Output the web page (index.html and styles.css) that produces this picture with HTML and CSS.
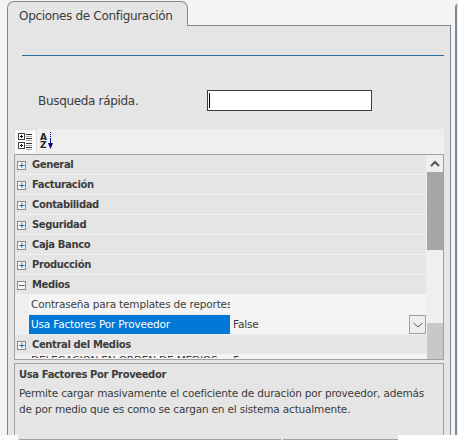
FILE: index.html
```html
<!DOCTYPE html>
<html lang="es">
<head>
<meta charset="utf-8">
<title>Opciones de Configuración</title>
<link rel="stylesheet" href="styles.css">
</head>
<body>
<div class="window">
  <div class="main">
    <div class="tabs"><div class="tab">Opciones de Configuración</div></div>
    <div class="panel">
      <hr class="rule">
      <div class="search">
        <label class="search-label">Busqueda rápida.</label>
        <div class="search-input"><span class="caret"></span></div>
      </div>
      <div class="toolbar">
        <div class="tool active">
          <svg width="15" height="17" viewBox="0 0 15 17" shape-rendering="crispEdges"><rect x="0.500" y="0.500" width="6" height="6" fill="#fff" stroke="#444"/><path d="M2 3.500h3M3.500 2v3" stroke="#111"/><rect x="0.500" y="9.500" width="6" height="6" fill="#fff" stroke="#444"/><path d="M2 12.500h3M3.500 11v3" stroke="#111"/><path d="M8 1.500h6M8 5.500h6M8 10.500h6M8 14.500h6" stroke="#333"/><path d="M8 3.500h6M8 7.500h6M8 12.500h6M8 16.500h6" stroke="#aaa"/></svg>
        </div>
        <div class="tool">
          <svg width="16" height="18" viewBox="0 0 16 18"><text x="0" y="8" class="az">A</text><text x="0" y="16" class="az">Z</text><path d="M10.500 0v1M10.500 2v1M10.500 4v1M10.500 6v6" stroke="#000080" fill="none"/><path d="M8 11h5l-2.500 6z" fill="#000080"/></svg>
        </div>
      </div>
      <div class="grid">
        <div class="grid-rows">
          <div class="cat"><span class="exp">+</span><span>General</span></div>
          <div class="cat"><span class="exp">+</span><span>Facturación</span></div>
          <div class="cat"><span class="exp">+</span><span>Contabilidad</span></div>
          <div class="cat"><span class="exp">+</span><span>Seguridad</span></div>
          <div class="cat"><span class="exp">+</span><span>Caja Banco</span></div>
          <div class="cat"><span class="exp">+</span><span>Producción</span></div>
          <div class="cat"><span class="exp minus">−</span><span>Medios</span></div>
          <div class="prop first"><div class="prop-name">Contraseña para templates de reportes</div><div class="prop-value"></div></div>
          <div class="prop selected"><div class="prop-name">Usa Factores Por Proveedor</div><div class="prop-value"><span>False</span><span class="drop"><svg width="12" height="12" viewBox="0 0 12 12"><path d="M1.500 4l4.500 4 4.500-4" fill="none" stroke="#555"/></svg></span></div></div>
          <div class="cat"><span class="exp">+</span><span>Central del Medios</span></div>
          <div class="prop cut"><div class="prop-name">DELEGACION EN ORDEN DE MEDIOS</div><div class="prop-value">F</div></div>
        </div>
        <div class="scrollbar">
          <div class="arrow"><svg width="10" height="8" viewBox="0 0 10 8"><path d="M1 6l4-4 4 4" fill="none" stroke="#555" stroke-width="2"/></svg></div>
          <div class="thumb"></div>
          <div class="track"></div>
          <div class="thumb low"></div>
        </div>
      </div>
      <div class="help">
        <div class="help-title">Usa Factores Por Proveedor</div>
        <p class="help-text">Permite cargar masivamente el coeficiente de duración por proveedor, además de por medio que es como se cargan en el sistema actualmente.</p>
      </div>
      <div class="footer"><div class="foot-a"></div><div class="foot-b"></div></div>
    </div>
  </div>
  <div class="edge"></div>
</div>
<div class="patch-left"></div>
<div class="patch-right"></div>
</body>
</html>
```
FILE: styles.css
```css
html, body { margin: 0; padding: 0; }
body {
  width: 458px; height: 440px; overflow: hidden; position: relative;
  background: #f4f4f4; color: #3c3c3c;
  font: 10.5px "DejaVu Sans", sans-serif;
}
.window { display: flex; height: 440px; padding-left: 7px; box-sizing: border-box; }
.main { width: 444px; flex: none; display: flex; flex-direction: column; }
.edge { width: 3px; flex: none; margin: 4px 0 0 4px; border-left: 2px solid #7d8a90; border-top-left-radius: 3px; background: #eee; box-sizing: border-box; }
.tabs { height: 25px; flex: none; padding-top: 1px; box-sizing: border-box; position: relative; z-index: 1; }
.tab {
  width: 181px; height: 25px; box-sizing: border-box;
  border: 1px solid #7d8a90; border-bottom: 0; border-radius: 7px 7px 0 0;
  background: #e5e5e5; padding: 7px 0 0 11px; font-size: 12px; line-height: 14px; letter-spacing: -.32px;
}
.panel {
  flex: 1; border: 1px solid #7d8a90; border-bottom: 0; background: #e5e5e5;
  padding: 29px 6px 0 6px; display: flex; flex-direction: column; min-height: 0;
}
.rule { margin: 0 0 0 8px; height: 1px; border: 0; background: #2a6d9b; flex: none; }
.search { display: flex; align-items: center; height: 21px; margin-top: 34px; padding-left: 24px; flex: none; }
.search-label { width: 169px; font-size: 12px; letter-spacing: -.32px; }
.search-input { width: 165px; height: 21px; box-sizing: border-box; border: 1px solid #3c3c3c; background: #fff; padding: 2px 1px; }
.caret { display: block; width: 1px; height: 15px; background: #000; }
.toolbar { display: flex; height: 25px; margin-top: 18px; background: #efefef; flex: none; }
.tool { width: 22px; height: 24px; display: flex; align-items: center; justify-content: center; }
.tool.active { background: #fafafa; border: 1px solid #ddd; border-bottom: 0; box-sizing: border-box; width: 23px; }
.az { font: bold 9px "DejaVu Sans", sans-serif; fill: #222; }
.grid { display: flex; height: 204px; border: 1px solid #a0a0a0; background: #efefef; flex: none; overflow: hidden; }
.grid-rows { flex: 1; min-width: 0; overflow: hidden; }
.cat {
  height: 19px; margin-bottom: 1px; display: flex; align-items: center; background: #e5e5e5;
  font-weight: bold; font-size: 10px; letter-spacing: -.38px; box-shadow: 0 1px 0 #f2f2f2;
}
.exp {
  width: 9px; height: 9px; box-sizing: border-box; margin: 2px 6px 0 2px; border: 1px solid #8a8a8a; background: #f6f6f6;
  color: #2a3f8f; font: 9px/7px "DejaVu Sans", sans-serif; letter-spacing: 0; text-align: center; flex: none;
}
.exp.minus { color: #333; }
.prop { height: 19px; margin-bottom: 1px; display: flex; letter-spacing: -.17px; line-height: 19px; background: #f4f4f4; margin-left: 14px; }
.prop.first { margin-top: 1px; }
.prop-name { width: 201px; flex: none; padding-left: 2px; box-sizing: border-box; white-space: nowrap; overflow: hidden; margin-right: 1px; }
.prop-value { flex: 1; display: flex; justify-content: space-between; padding-left: 2px; }
.selected .prop-name { background: #0078d7; color: #fff; }
.drop { width: 17px; height: 19px; border: 1px solid #a0a0a0; background: #eee; box-sizing: border-box; display: flex; align-items: center; justify-content: center; }
.cut { height: 3px; line-height: 11px; overflow: hidden; margin: 1px 0 0 14px; }
.cut .prop-name, .cut .prop-value { line-height: 11px; }
.scrollbar { width: 16px; flex: none; display: flex; flex-direction: column; margin-left: 1px; }
.arrow { height: 17px; display: flex; align-items: center; justify-content: center; }
.thumb { height: 78px; background: #a6a6a6; }
.track { height: 73px; }
.thumb.low { height: 36px; background: #c8c8c8; }
.help { height: 76px; margin-top: 3px; border: 1px solid #a0a0a0; border-bottom: 0; box-sizing: border-box; background: #e5e5e5; padding: 4px 4px; flex: none; }
.help-title { font-weight: bold; font-size: 10px; letter-spacing: -.38px; line-height: 13px; }
.help-text { margin: 4px 0 0; letter-spacing: -.17px; line-height: 16px; }
.footer { display: flex; flex: none; height: 1px; margin: 0 0 0 5px; }
.foot-a { width: 262px; border-top: 1px solid #a0a0a0; }
.foot-b { flex: 1; margin-left: 2px; border-top: 1px solid #a0a0a0; }
.patch-left { position: absolute; left: 0; bottom: 0; width: 18px; height: 5px; background: #fafafa; }
.patch-right { position: absolute; right: 0; bottom: 0; width: 60px; height: 5px; background: #fff; }
```
